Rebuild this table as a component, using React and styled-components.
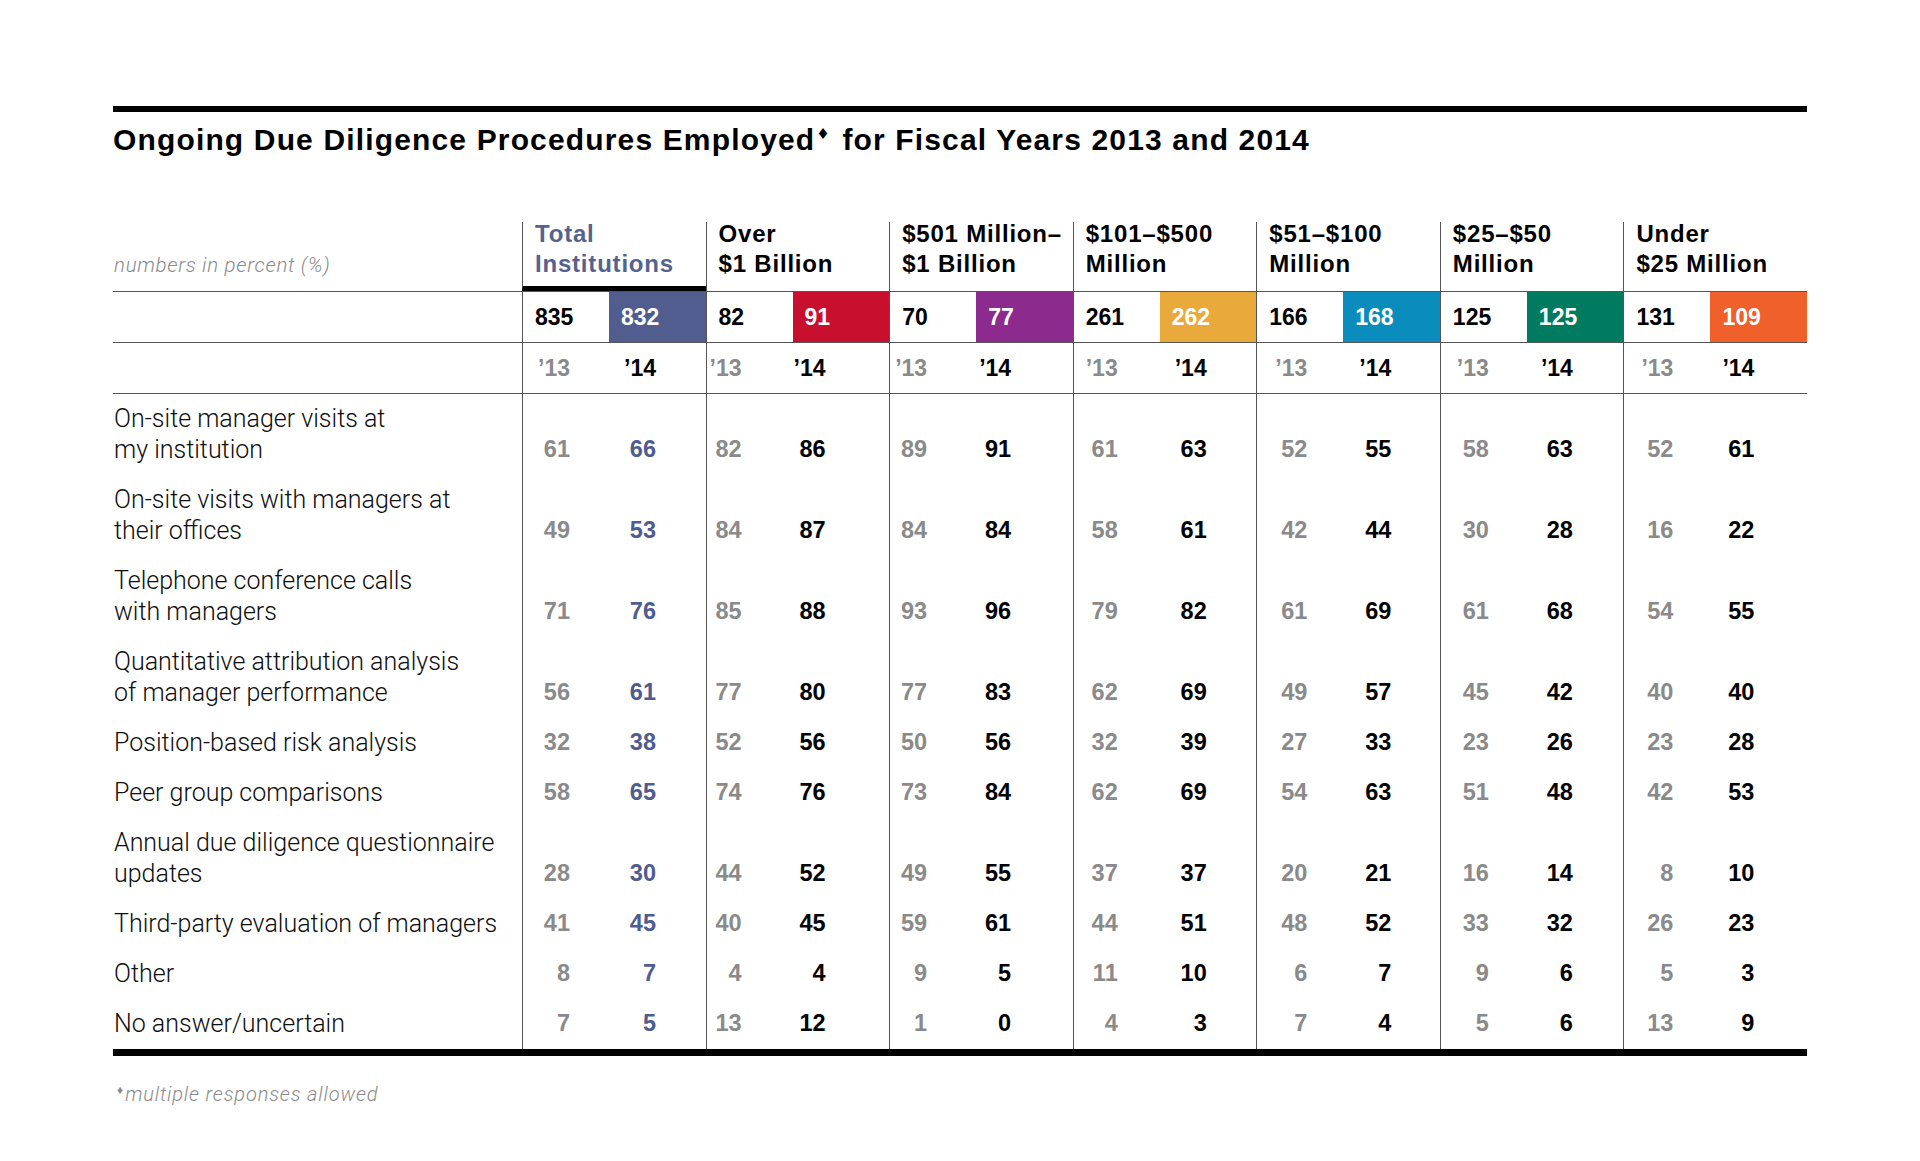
import styled, { createGlobalStyle } from "styled-components";

const SANS = `"Liberation Sans", Arial, sans-serif`;
const LIGHT = `Roboto, "Liberation Sans", Arial, sans-serif`;
const LINE = "#555";
const GROUP_W = (1694 - 409) / 7;

const GlobalStyle = createGlobalStyle`
  html, body {
    margin: 0;
    padding: 0;
    background: #fff;
  }
  body {
    font-family: ${SANS};
    color: #1a1a1a;
  }
`;

const Page = styled.div`
  width: 1920px;
  min-height: 1161px;
  box-sizing: border-box;
  padding: 106px 0 0 113px;
`;

const Sheet = styled.div`
  width: 1694px;
`;

const Rule = styled.div`
  height: ${(p) => p.$h}px;
  background: #000;
`;

const Title = styled.h1`
  margin: 10px 0 0;
  font-family: ${SANS};
  font-weight: 700;
  font-size: 30px;
  line-height: 36px;
  letter-spacing: 1.15px;
  color: #000;

  sup {
    font-family: "DejaVu Sans", sans-serif;
    font-size: 15px;
    vertical-align: 11px;
    line-height: 0;
    margin: 0 2px 0 1px;
  }
`;

const Table = styled.div`
  margin-top: 64px;
`;

const Row = styled.div`
  display: grid;
  grid-template-columns: 409px repeat(7, 87px minmax(0, 1fr));
  border-bottom: ${(p) => (p.$line ? `1px solid ${LINE}` : "none")};
`;

const UnitNote = styled.div`
  display: flex;
  align-items: flex-end;
  padding: 0 0 14px 1px;
  font-family: ${LIGHT};
  font-weight: 300;
  font-style: italic;
  font-size: 20.5px;
  line-height: 24px;
  letter-spacing: 0.7px;
  color: #8a8a8a;
`;

const HeadCell = styled.div`
  grid-column: span 2;
  height: 69px;
  box-sizing: border-box;
  padding-left: 12px;
  border-left: 1px solid ${LINE};
  border-bottom: ${(p) => (p.$accent ? "5px solid #000" : "none")};
  color: ${(p) => (p.$accent ? "#55628f" : "#000")};
  font-weight: 700;
  font-size: 24px;
  line-height: 30px;
  letter-spacing: 0.8px;
  white-space: nowrap;

  div:first-child {
    margin-top: -3px;
  }
`;

const CountCell = styled.div`
  height: 50px;
  box-sizing: border-box;
  padding-left: 12px;
  border-left: ${(p) => (p.$first ? `1px solid ${LINE}` : "none")};
  background: ${(p) => p.$bg || "transparent"};
  color: ${(p) => (p.$bg ? "#fff" : "#000")};
  font-weight: 700;
  font-size: 23px;
  line-height: 50px;
`;

const Blank = styled.div``;

const YearCell = styled.div`
  height: 50px;
  box-sizing: border-box;
  text-align: right;
  padding-right: ${(p) => p.$pad}px;
  border-left: ${(p) => (p.$first ? `1px solid ${LINE}` : "none")};
  color: ${(p) => (p.$old ? "#8a8a8a" : "#000")};
  font-weight: 700;
  font-size: 23px;
  line-height: 50px;
`;

const Label = styled.div`
  padding: 9px 0 10px 1px;
  font-family: ${LIGHT};
  font-weight: 300;
  font-size: 25px;
  line-height: 31px;
  color: #0d0d0d;
  white-space: nowrap;
`;

const NumCell = styled.div`
  display: flex;
  align-items: flex-end;
  justify-content: flex-end;
  padding: 0 ${(p) => p.$pad}px 10px 0;
  border-left: ${(p) => (p.$first ? `1px solid ${LINE}` : "none")};
  color: ${(p) => p.$color};
  font-weight: 700;
  font-size: 23.5px;
  line-height: 31px;
`;

const Footnote = styled.p`
  margin: 22px 0 0 4px;
  font-family: ${LIGHT};
  font-weight: 300;
  font-style: italic;
  font-size: 20px;
  line-height: 24px;
  letter-spacing: 0.85px;
  color: #8a8a8a;

  span {
    font-family: "DejaVu Sans", sans-serif;
    font-style: normal;
    font-size: 12px;
    vertical-align: 7px;
    margin-right: 2px;
    letter-spacing: 0;
  }
`;

// off = right edge of the '13 and '14 figures, measured from the group's left line
const groups = [
  { name: ["Total", "Institutions"], color: "#515d8e", n: [835, 832], off: [48, 134], accent: true },
  { name: ["Over", "$1 Billion"], color: "#c8102e", n: [82, 91], off: [36, 120] },
  { name: ["$501 Million–", "$1 Billion"], color: "#8c2a8e", n: [70, 77], off: [38, 122] },
  { name: ["$101–$500", "Million"], color: "#e9a93b", n: [261, 262], off: [45, 134] },
  { name: ["$51–$100", "Million"], color: "#0a8cbc", n: [166, 168], off: [51, 135] },
  { name: ["$25–$50", "Million"], color: "#007b5f", n: [125, 125], off: [49, 133] },
  { name: ["Under", "$25 Million"], color: "#f0602b", n: [131, 109], off: [50, 131] },
];

const rows = [
  { label: ["On-site manager visits at", "my institution"], v: [[61, 66], [82, 86], [89, 91], [61, 63], [52, 55], [58, 63], [52, 61]] },
  { label: ["On-site visits with managers at", "their offices"], v: [[49, 53], [84, 87], [84, 84], [58, 61], [42, 44], [30, 28], [16, 22]] },
  { label: ["Telephone conference calls", "with managers"], v: [[71, 76], [85, 88], [93, 96], [79, 82], [61, 69], [61, 68], [54, 55]] },
  { label: ["Quantitative attribution analysis", "of manager performance"], v: [[56, 61], [77, 80], [77, 83], [62, 69], [49, 57], [45, 42], [40, 40]] },
  { label: ["Position-based risk analysis"], v: [[32, 38], [52, 56], [50, 56], [32, 39], [27, 33], [23, 26], [23, 28]] },
  { label: ["Peer group comparisons"], v: [[58, 65], [74, 76], [73, 84], [62, 69], [54, 63], [51, 48], [42, 53]] },
  { label: ["Annual due diligence questionnaire", "updates"], v: [[28, 30], [44, 52], [49, 55], [37, 37], [20, 21], [16, 14], [8, 10]] },
  { label: ["Third-party evaluation of managers"], v: [[41, 45], [40, 45], [59, 61], [44, 51], [48, 52], [33, 32], [26, 23]] },
  { label: ["Other"], v: [[8, 7], [4, 4], [9, 5], [11, 10], [6, 7], [9, 6], [5, 3]] },
  { label: ["No answer/uncertain"], v: [[7, 5], [13, 12], [1, 0], [4, 3], [7, 4], [5, 6], [13, 9]] },
];

const pad13 = (g) => 87 - g.off[0];
const pad14 = (g) => GROUP_W - g.off[1];

export default function App() {
  return (
    <>
      <GlobalStyle />
      <Page>
        <Sheet>
          <Rule $h={6} />
          <Title>
            Ongoing Due Diligence Procedures Employed<sup>♦</sup> for Fiscal Years 2013 and 2014
          </Title>

          <Table>
            <Row $line>
              <UnitNote>numbers in percent (%)</UnitNote>
              {groups.map((g) => (
                <HeadCell key={g.name.join()} $accent={g.accent}>
                  <div>{g.name[0]}</div>
                  <div>{g.name[1]}</div>
                </HeadCell>
              ))}
            </Row>

            <Row $line>
              <Blank />
              {groups.map((g) => [
                <CountCell key={g.name[0] + "a"} $first>{g.n[0]}</CountCell>,
                <CountCell key={g.name[0] + "b"} $bg={g.color}>{g.n[1]}</CountCell>,
              ])}
            </Row>

            <Row $line>
              <Blank />
              {groups.map((g) => [
                <YearCell key={g.name[0] + "a"} $first $old $pad={pad13(g)}>’13</YearCell>,
                <YearCell key={g.name[0] + "b"} $pad={pad14(g)}>’14</YearCell>,
              ])}
            </Row>

            {rows.map((r) => (
              <Row key={r.label[0]}>
                <Label>
                  {r.label.map((line) => (
                    <div key={line}>{line}</div>
                  ))}
                </Label>
                {r.v.map(([a, b], i) => [
                  <NumCell key={i + "a"} $first $color="#8a8a8a" $pad={pad13(groups[i])}>{a}</NumCell>,
                  <NumCell key={i + "b"} $color={i === 0 ? "#4f5c8f" : "#000"} $pad={pad14(groups[i])}>{b}</NumCell>,
                ])}
              </Row>
            ))}
          </Table>

          <Rule $h={7} />
          <Footnote>
            <span>♦</span>multiple responses allowed
          </Footnote>
        </Sheet>
      </Page>
    </>
  );
}
